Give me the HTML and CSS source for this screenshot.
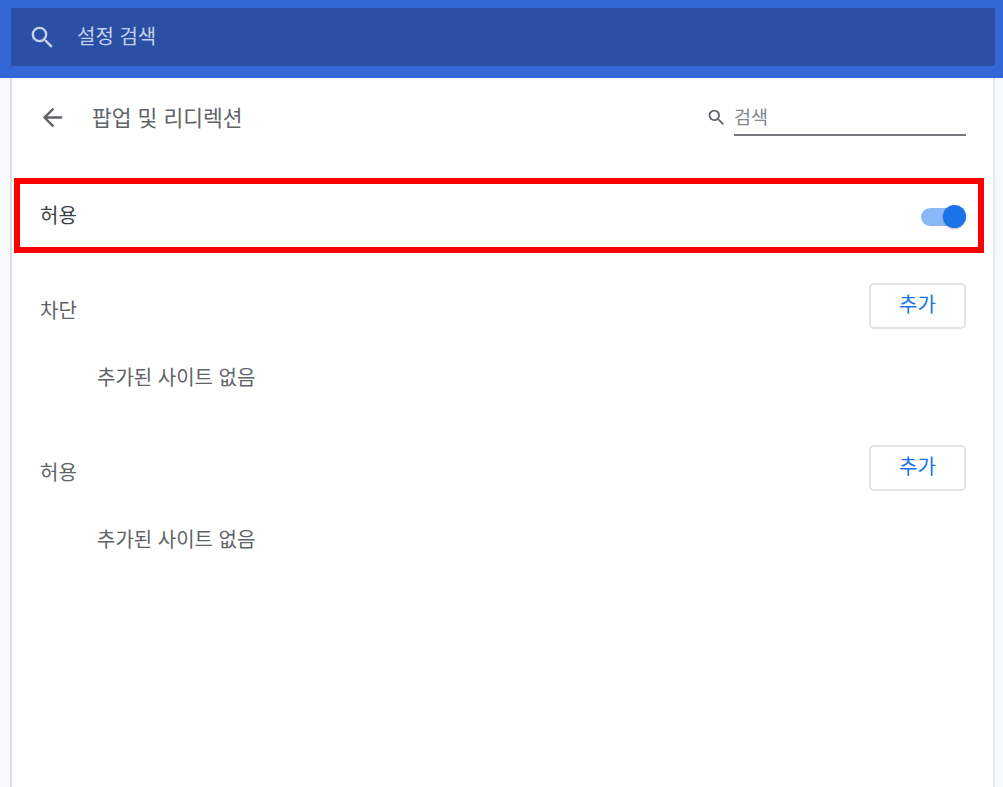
FILE: index.html
```html
<!DOCTYPE html>
<html lang="ko">
<head>
    <meta charset="UTF-8">
    <meta name="viewport" content="width=device-width, initial-scale=1.0">
    <title>팝업 및 리디렉션</title>
    <link rel="stylesheet" href="styles.css">
</head>
<body>
    <!-- Top search bar -->
    <div class="topbar">
        <div class="topbar-search">
            <svg class="topbar-icon" viewBox="0 0 24 24"><path d="M15.5 14h-.79l-.28-.27A6.47 6.47 0 0 0 16 9.5 6.5 6.5 0 1 0 9.5 16c1.61 0 3.09-.59 4.23-1.57l.27.28v.79l5 4.99L20.49 19l-4.99-5zm-6 0C7.01 14 5 11.99 5 9.5S7.01 5 9.5 5 14 7.01 14 9.5 11.99 14 9.5 14z"/></svg>
            <span class="topbar-text">설정 검색</span>
        </div>
    </div>

    <div class="card">
        <!-- Sub page header -->
        <div class="page-header">
            <svg class="back-icon" viewBox="0 0 24 24"><path d="M20 11H7.83l5.59-5.59L12 4l-8 8 8 8 1.41-1.41L7.83 13H20v-2z"/></svg>
            <h1>팝업 및 리디렉션</h1>
            <div class="site-search">
                <svg class="site-search-icon" viewBox="0 0 24 24"><path d="M15.5 14h-.79l-.28-.27A6.47 6.47 0 0 0 16 9.5 6.5 6.5 0 1 0 9.5 16c1.61 0 3.09-.59 4.23-1.57l.27.28v.79l5 4.99L20.49 19l-4.99-5zm-6 0C7.01 14 5 11.99 5 9.5S7.01 5 9.5 5 14 7.01 14 9.5 11.99 14 9.5 14z"/></svg>
                <span class="site-search-input">검색</span>
            </div>
        </div>

        <!-- Allow toggle -->
        <div class="toggle-row">
            <span class="toggle-label">허용</span>
            <div class="toggle"><div class="toggle-knob"></div></div>
        </div>

        <!-- Block list -->
        <div class="list-head first">
            <span class="list-title">차단</span>
            <button class="add-btn">추가</button>
        </div>
        <div class="list-empty">추가된 사이트 없음</div>

        <!-- Allow list -->
        <div class="list-head">
            <span class="list-title">허용</span>
            <button class="add-btn">추가</button>
        </div>
        <div class="list-empty">추가된 사이트 없음</div>
    </div>
</body>
</html>
```

FILE: styles.css
```css
html, body {
    height: 100%;
}
body {
    font-family: "Noto Sans CJK KR", "Noto Sans", sans-serif;
    background-color: #f8f9fa;
    margin: 0;
    padding: 0;
    overflow: hidden;
}

/* Top search bar */
.topbar {
    background-color: #3367d6;
    height: 78px;
    padding: 8px 8px 0 11px;
    box-sizing: border-box;
}
.topbar-search {
    background-color: #2a4fa5;
    height: 58px;
    border-radius: 2px;
    display: flex;
    align-items: center;
    padding-left: 17px;
}
.topbar-icon {
    width: 29px;
    height: 29px;
    fill: #c6d2ec;
}
.topbar-text {
    margin: 0 0 3px 20px;
    color: #c6d2ec;
    font-size: 20px;
}

/* Card */
.card {
    margin: 0 8px 0 10px;
    height: 709px;
    background-color: #fff;
    border-left: 2px solid #dcdde0;
    border-right: 2px solid #e6e7ea;
    box-sizing: border-box;
}
.page-header {
    display: flex;
    align-items: center;
    height: 78px;
    padding: 0 27px 0 26px;
}
.back-icon {
    width: 29px;
    height: 29px;
    fill: #5f6368;
}
.page-header h1 {
    margin: 0 0 2px 25px;
    flex-grow: 1;
    font-size: 21.5px;
    font-weight: 400;
    color: #5f6368;
}
.site-search {
    display: flex;
    align-items: center;
}
.site-search-icon {
    width: 21px;
    height: 21px;
    fill: #5f6368;
    margin-right: 7px;
}
.site-search-input {
    width: 232px;
    height: 38px;
    line-height: 36px;
    font-size: 18.5px;
    color: #80868b;
    border-bottom: 2px solid #75787d;
    box-sizing: border-box;
}

/* Allow toggle */
.toggle-row {
    margin: 22px 0 0 2px;
    width: 970px;
    height: 75px;
    border: 6px solid #ff0000;
    box-sizing: border-box;
    display: flex;
    align-items: center;
    justify-content: space-between;
    padding: 0 12px 0 20px;
}
.toggle-label {
    font-size: 20px;
    color: #3c4043;
    margin-bottom: 3px;
}
.toggle {
    width: 45px;
    height: 18px;
    border-radius: 9px;
    background-color: #8ab8f6;
    position: relative;
    margin-top: 3px;
}
.toggle-knob {
    position: absolute;
    right: 0;
    top: -3px;
    width: 23px;
    height: 23px;
    border-radius: 50%;
    background-color: #1a73e8;
    box-shadow: 0 1px 2px rgba(0, 0, 0, 0.25);
}

/* Site lists */
.list-head {
    display: flex;
    align-items: center;
    justify-content: space-between;
    height: 46px;
    margin-top: 44px;
    padding: 0 27px 0 28px;
    font-size: 20px;
    color: #5f6368;
}
.list-head.first {
    margin-top: 30px;
}
.list-title {
    margin-top: 6px;
}
.add-btn {
    width: 97px;
    height: 46px;
    background-color: #fff;
    border: 2px solid #e0e2e6;
    border-radius: 5px;
    color: #1a73e8;
    font-family: inherit;
    font-size: 20px;
    padding: 0 0 5px;
}
.list-empty {
    height: 72px;
    line-height: 96px;
    padding-left: 85px;
    font-size: 20px;
    color: #5f6368;
}
```
